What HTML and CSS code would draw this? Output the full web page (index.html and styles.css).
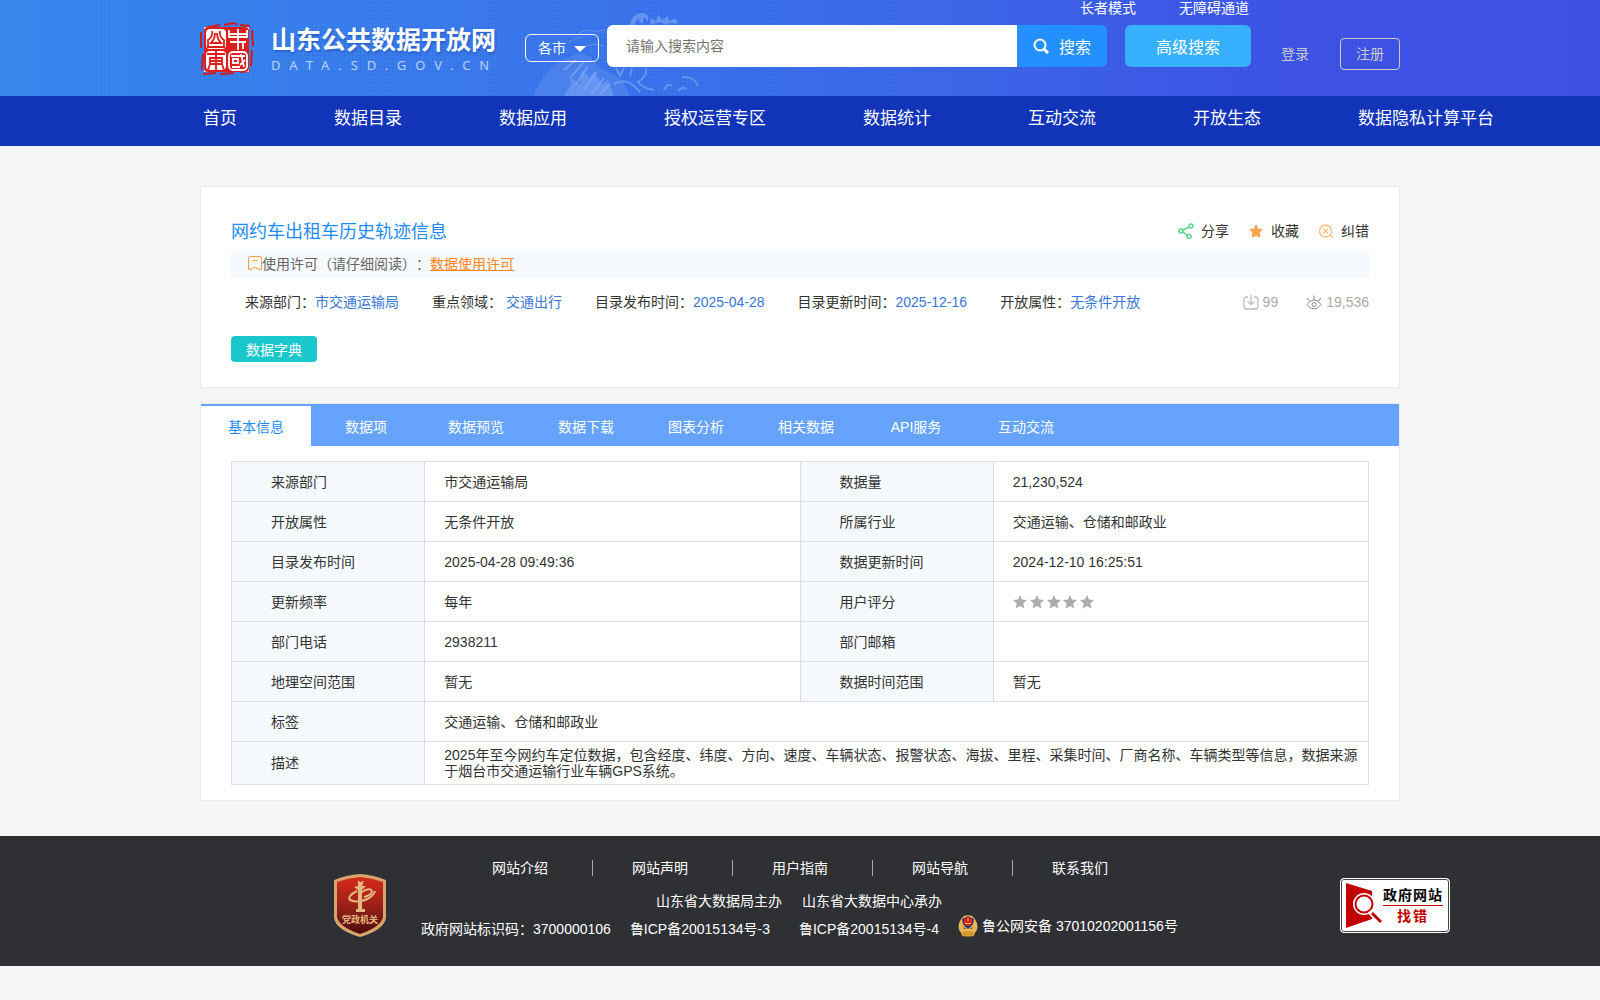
FILE: index.html
```html
<!DOCTYPE html>
<html lang="zh-CN">
<head>
    <meta charset="UTF-8">
    <meta name="viewport" content="width=device-width, initial-scale=1.0">
    <title>山东公共数据开放网</title>
    <link rel="stylesheet" href="styles.css">
</head>
<body>
    <header class="header">
        <svg class="header-art" width="220" height="96" viewBox="0 0 220 96" fill="none" stroke="#8fb4f8">
            <path d="M4 96 Q14 66 42 56 Q56 48 68 66 L92 80 L100 96 Z" fill="#6f9cf3" stroke="none" opacity=".3"/>
            <path d="M34 96 L42 84 L40 78 L50 84 L52 70 L60 78 L64 72 L72 84 L78 80 L84 96 Z" fill="#7fa8f6" stroke="none" opacity=".5"/>
            <g opacity=".5">
                <path d="M34 70 L46 60 M40 78 L54 62 M46 84 L58 66 M54 90 L66 72 M62 94 L74 78 M70 94 L80 84" stroke-width="2"/>
                <path d="M38 44 Q44 36 52 38 M48 34 Q56 28 66 32 Q74 28 78 34 M54 48 Q62 42 74 46"/>
                <path d="M86 68 L90 76 L94 68 M100 76 L102 68 M116 68 Q118 76 108 82 Q112 88 124 90 M84 84 Q96 78 104 86 L110 92" stroke-width="2"/>
                <path d="M134 90 Q138 82 142 86 M148 91 Q152 86 156 89 M152 77 Q164 76 168 86" stroke-width="2"/>
            </g>
            <g opacity=".5" fill="#8fb4f8" stroke="none">
                <path d="M100 25 Q102 13 113 13 Q120 14 118 22 L114 17 L112 25 L108 18 L104 25 Z"/>
                <path d="M120 25 L121 18 L126 21 L128 15 L132 20 L138 16 L139 21 Q149 16 147 24 L140 23 L136 25 L130 22 Z"/>
            </g>
        </svg>
        <div class="container">
            <div class="top-links">
                <a href="#">长者模式</a>
                <a href="#">无障碍通道</a>
            </div>
            <div class="header-main">
                <a class="logo" href="#">
                    <svg class="seal" width="54" height="54" viewBox="0 0 54 54" fill="none">
                        <path d="M4 6 L20 3 M24 3 L34 1 L37 3 M40 3 L50 4 M52 8 L53 24 M52 28 L51 44 M50 49 L40 50 M34 51 L20 52 M16 51 L3 52 M2 48 L3 32 M1 26 L1 10" stroke="#d01a1a" stroke-width="2"/>
                        <path d="M4 5 H49 V50 H4 Z" fill="#fff"/>
                        <rect x="4" y="5" width="45" height="45" rx="4" fill="#dc1f1c"/>
                        <rect x="6" y="7" width="20" height="20" rx="4" fill="#fff"/>
                        <rect x="6" y="29" width="20" height="19" rx="4" fill="#fff"/>
                        <g stroke="#dc1f1c" stroke-width="1.800">
                            <path d="M12 9 Q13 15 8 18 V25 H24 V18 Q19 15 20 9 M15 11 Q15 17 11 21 H21 Q17 17 17 11"/>
                            <path d="M7 32 H25 M16 29 V48 M10 36 H22 V42 H10 Z M10 39 H22 M10 42 L8 48 M22 42 L24 48"/>
                        </g>
                        <g stroke="#fff" stroke-width="1.800">
                            <path d="M29 8 V15 H47 V8 M38 7 V28 M29 12 H47 M30 20 H46 M43 20 V27"/>
                            <rect x="29" y="30" width="18" height="18" rx="4"/>
                            <path d="M31 34 H45 M33 37 H38 V41 H33 Z M32 45 H40 M41 32 L44 45 M45 38 L40 43"/>
                        </g>
                    </svg>
                    <span class="logo-text">
                        <span class="logo-name">山东公共数据开放网</span>
                        <span class="logo-domain">DATA.SD.GOV.CN</span>
                    </span>
                </a>
                <div class="city">
                    <select class="city-select" aria-label="各市">
                        <option>各市</option>
                    </select>
                    <span class="city-arrow"></span>
                </div>
                <form class="search">
                    <input type="text" class="search-input" placeholder="请输入搜索内容" aria-label="搜索内容">
                    <button type="button" class="search-button">
                        <svg width="16" height="16" viewBox="0 0 16 16" fill="none" stroke="#fff" stroke-width="2"><circle cx="7" cy="7" r="5.500"/><path d="M11 11 L15 15" stroke-width="3"/></svg>
                        搜索
                    </button>
                </form>
                <button type="button" class="advanced-button">高级搜索</button>
                <div class="user">
                    <a href="#">登录</a>
                    <a class="register" href="#">注册</a>
                </div>
            </div>
        </div>
    </header>
    <nav class="nav">
        <div class="container nav-list">
            <a href="#">首页</a>
            <a href="#">数据目录</a>
            <a href="#">数据应用</a>
            <a href="#">授权运营专区</a>
            <a href="#">数据统计</a>
            <a href="#">互动交流</a>
            <a href="#">开放生态</a>
            <a href="#">数据隐私计算平台</a>
        </div>
    </nav>

    <main class="container">
        <section class="card summary">
            <div class="summary-head">
                <h1>网约车出租车历史轨迹信息</h1>
                <div class="actions">
                    <a href="#">
                        <svg width="16" height="16" viewBox="0 0 16 16" fill="none" stroke="#56d78d" stroke-width="1.500"><circle cx="3" cy="8" r="2"/><circle cx="13" cy="3" r="2"/><circle cx="11" cy="13.500" r="2"/><path d="M5 7 L11 4 M5 9 L9.500 12.500"/></svg>
                        分享
                    </a>
                    <a href="#">
                        <svg width="16" height="16" viewBox="0 0 16 16" fill="#ffa550" stroke="#ffa550" stroke-linejoin="round"><path d="M8 2 L10 6 L14 6.600 L11.300 9.500 L12 14 L8 12.500 L4 14 L4.700 9.500 L2 6.600 L6 6 Z"/></svg>
                        收藏
                    </a>
                    <a href="#">
                        <svg width="16" height="16" viewBox="0 0 16 16" fill="none" stroke="#fcbf85" stroke-width="1.400"><circle cx="7.500" cy="8" r="6"/><path d="M5.300 5.800 L9.700 10.200 M9.700 5.800 L5.300 10.200 M12 12 L15 15"/></svg>
                        纠错
                    </a>
                </div>
            </div>
            <div class="license">
                <svg width="14" height="15" viewBox="0 0 14 15" fill="none" stroke="#ff9a40"><path d="M.5 13.500 V2.500 Q.5 .5 2.500 .5 H11.500 Q13.500 .5 13.500 2.500 V13.500 Q10 14 7 11 Q4 14 .5 13.500 Z M5 4.500 H9"/></svg>
                <span>使用许可（请仔细阅读）：</span>
                <a href="#">数据使用许可</a>
            </div>
            <div class="meta">
                <span>来源部门：<em>市交通运输局</em></span>
                <span>重点领域： <em>交通出行</em></span>
                <span>目录发布时间：<em>2025-04-28</em></span>
                <span>目录更新时间：<em>2025-12-16</em></span>
                <span>开放属性：<em>无条件开放</em></span>
                <div class="counts">
                    <span>
                        <svg width="16" height="16" viewBox="0 0 16 16" fill="none" stroke="#bbb" stroke-width="1.300"><path d="M5 3 H3.500 Q1 3 1 5.500 V12.500 Q1 15 3.500 15 H12.500 Q15 15 15 12.500 V5.500 Q15 3 12.500 3 H11 M8 1 V10 M4.500 7.500 L8 10.500 L11.500 7.500"/></svg>
                        99
                    </span>
                    <span>
                        <svg width="16" height="16" viewBox="0 0 16 16" fill="none" stroke="#888"><path d="M1 10.500 Q4 6 8 6 Q12 6 15 10.500 Q12 15 8 15 Q4 15 1 10.500 Z M8 6 V1.500 M3.500 7 L1 4 M12.500 7 L15 4"/><circle cx="8" cy="10.500" r="2"/></svg>
                        19,536
                    </span>
                </div>
            </div>
            <button type="button" class="dict-button">数据字典</button>
        </section>

        <section class="card detail">
            <div class="tabs">
                <button type="button" class="tab active">基本信息</button>
                <button type="button" class="tab">数据项</button>
                <button type="button" class="tab">数据预览</button>
                <button type="button" class="tab">数据下载</button>
                <button type="button" class="tab">图表分析</button>
                <button type="button" class="tab">相关数据</button>
                <button type="button" class="tab">API服务</button>
                <button type="button" class="tab">互动交流</button>
            </div>
            <table class="info">
                <tr>
                    <th>来源部门</th><td>市交通运输局</td>
                    <th>数据量</th><td>21,230,524</td>
                </tr>
                <tr>
                    <th>开放属性</th><td>无条件开放</td>
                    <th>所属行业</th><td>交通运输、仓储和邮政业</td>
                </tr>
                <tr>
                    <th>目录发布时间</th><td>2025-04-28 09:49:36</td>
                    <th>数据更新时间</th><td>2024-12-10 16:25:51</td>
                </tr>
                <tr>
                    <th>更新频率</th><td>每年</td>
                    <th>用户评分</th>
                    <td>
                        <svg class="stars" width="84" height="14" viewBox="0 0 84 14" fill="#acacac">
                            <defs><path id="star" d="M7 0 L9 4.500 L14 5 L10.300 8.400 L11.400 13.500 L7 11 L2.600 13.500 L3.700 8.400 L0 5 L5 4.500 Z"/></defs>
                            <use href="#star"/>
                            <use href="#star" x="17"/>
                            <use href="#star" x="34"/>
                            <use href="#star" x="50"/>
                            <use href="#star" x="67"/>
                        </svg>
                    </td>
                </tr>
                <tr>
                    <th>部门电话</th><td>2938211</td>
                    <th>部门邮箱</th><td></td>
                </tr>
                <tr>
                    <th>地理空间范围</th><td>暂无</td>
                    <th>数据时间范围</th><td>暂无</td>
                </tr>
                <tr>
                    <th>标签</th><td colspan="3">交通运输、仓储和邮政业</td>
                </tr>
                <tr>
                    <th>描述</th>
                    <td colspan="3">2025年至今网约车定位数据，包含经度、纬度、方向、速度、车辆状态、报警状态、海拔、里程、采集时间、厂商名称、车辆类型等信息，数据来源于烟台市交通运输行业车辆GPS系统。</td>
                </tr>
            </table>
        </section>
    </main>

    <footer class="footer">
        <svg class="party-badge" width="52" height="63" viewBox="0 0 52 63">
            <defs>
                <linearGradient id="shield" x1="0" y1="0" x2="0" y2="1">
                    <stop offset="0" stop-color="#d62a18"/>
                    <stop offset=".55" stop-color="#94201a"/>
                    <stop offset="1" stop-color="#4a0b0a"/>
                </linearGradient>
            </defs>
            <path d="M26 0 Q40 1 52 6 V44 Q50 56 26 63 Q2 56 0 44 V6 Q12 1 26 0 Z" fill="#d9a46b"/>
            <path d="M26 3 Q38 4 49 8 V43 Q47 53 26 60 Q5 53 3 43 V8 Q14 4 26 3 Z" fill="url(#shield)"/>
            <path d="M24 6 L26 8 L30 7 L28 12 H32 L28 16 V35 H31 V38 H22 V35 H24 V16 L20 13 L24 12 Z" fill="#e6b77e"/>
            <path d="M23 17 Q13 22 16 26 Q24 30 35 24 Q40 21 41 17 M28 18 Q36 13 38 17 Q38 21 30 23" fill="none" stroke="#e6b77e" stroke-width="2"/>
            <text x="26" y="49" text-anchor="middle" class="party-text">党政机关</text>
        </svg>
        <div class="footer-center">
            <div class="footer-links">
                <a href="#">网站介绍</a>
                <a href="#">网站声明</a>
                <a href="#">用户指南</a>
                <a href="#">网站导航</a>
                <a href="#">联系我们</a>
            </div>
            <div class="footer-org">
                <span>山东省大数据局主办</span>
                <span>山东省大数据中心承办</span>
            </div>
            <div class="footer-record">
                <span>政府网站标识码：3700000106</span>
                <a href="#">鲁ICP备20015134号-3</a>
                <a class="record-next" href="#">鲁ICP备20015134号-4</a>
                <a class="police" href="#">
                    <svg width="20" height="22" viewBox="0 0 20 22">
                        <path d="M3 4 Q-2 12 3 18 Q10 23 17 18 Q22 12 17 4 L14 14 H6 Z" fill="#e9b55a"/>
                        <path d="M10 0 L14 1 L17 4 Q18 12 10 15 Q2 12 3 4 L6 1 Z" fill="#f0c050"/>
                        <path d="M10 1 L16 4 Q16 11 10 14 Q4 11 4 4 Z" fill="#2b3a80"/>
                        <circle cx="10" cy="6.500" r="4.500" fill="#d8241c"/>
                        <path d="M7 8.500 H13 M10 3.500 V6" stroke="#f4c94e"/>
                        <path d="M3 18 Q10 14 17 18 L16 21 Q10 22 4 21 Z" fill="#d89a30"/>
                    </svg>
                    鲁公网安备 37010202001156号
                </a>
            </div>
        </div>
        <a class="report" href="#">
            <svg width="37" height="45" viewBox="0 0 37 45">
                <path d="M1 0 L27 8 V36 L1 45 Z" fill="#c30000"/>
                <circle cx="19" cy="21" r="11" fill="#fff"/>
                <circle cx="19" cy="21" r="8.500" fill="#fff" stroke="#c30000" stroke-width="2"/>
                <path d="M25 28 L36 40" stroke="#fff" stroke-width="6"/>
                <path d="M27 30 L36 39" stroke="#c30000" stroke-width="3"/>
            </svg>
            <span class="report-text">
                <span>政府网站</span>
                <span class="report-find">找错</span>
            </span>
        </a>
    </footer>
</body>
</html>
```

FILE: styles.css
```css
* {
    box-sizing: border-box;
}
body {
    margin: 0;
    font-family: "Liberation Sans", "Noto Sans CJK SC", sans-serif;
    font-size: 14px;
    line-height: 20px;
    text-spacing-trim: space-all;
    color: #333;
    background-color: #f5f5f5;
}
a {
    color: inherit;
    text-decoration: none;
}
button,
input,
select {
    font-family: inherit;
    font-size: 14px;
}
button {
    border: none;
    padding: 0;
    cursor: pointer;
}
svg {
    flex-shrink: 0;
}
.container {
    width: 75%;
    min-width: 1200px;
    margin: 0 auto;
}

/* header */
.header {
    position: relative;
    height: 96px;
    background:
        repeating-linear-gradient(0deg, rgba(0, 40, 160, 0.06) 0 1px, transparent 1px 4px),
        repeating-linear-gradient(90deg, rgba(0, 40, 160, 0.06) 0 1px, transparent 1px 4px),
        linear-gradient(90deg, #3889ee 0%, #3b78ed 35%, #3d66e9 62%, #3f54e6 80%, #3f52e5 100%);
    color: #fff;
}
.header-art {
    position: absolute;
    left: 530px;
    top: 0;
}
.header .container {
    position: relative;
}
.top-links {
    display: flex;
    justify-content: flex-end;
    gap: 43px;
    height: 16px;
    padding-right: 151px;
    line-height: 16px;
}
.header-main {
    display: flex;
    align-items: flex-start;
}
.logo {
    display: flex;
    margin-top: 6px;
}
.logo-text {
    display: flex;
    flex-direction: column;
    width: 271px;
    padding-left: 17px;
}
.logo-name {
    font-size: 25px;
    line-height: 36px;
    font-weight: bold;
    text-shadow: 1px 2px 2px rgba(20, 60, 160, 0.4);
}
.logo-domain {
    font-family: "Noto Sans", sans-serif;
    font-size: 13px;
    line-height: 14px;
    letter-spacing: 9px;
    white-space: nowrap;
    color: #b9d3fa;
}
.city {
    position: relative;
    margin-top: 18px;
}
.city-select {
    appearance: none;
    display: block;
    width: 74px;
    height: 28px;
    padding: 0 12px;
    border: 1px solid #fff;
    border-radius: 6px;
    background: transparent;
    color: #fff;
}
.city-arrow {
    position: absolute;
    right: 13px;
    top: 12px;
    border: 6px solid transparent;
    border-top-color: #fff;
    border-bottom: none;
    pointer-events: none;
}
.search {
    display: flex;
    flex: 1;
    margin: 9px 18px 0 8px;
}
.search-input {
    flex: 1;
    min-width: 0;
    height: 42px;
    padding: 0 19px;
    border: none;
    border-radius: 6px 0 0 6px;
    background-color: #fff;
}
.search-input::placeholder {
    color: #757575;
}
.search-button {
    display: flex;
    align-items: center;
    justify-content: center;
    gap: 10px;
    width: 90px;
    height: 42px;
    border-radius: 0 6px 6px 0;
    background-color: #248fff;
    color: #fff;
    font-size: 16px;
}
.advanced-button {
    width: 126px;
    height: 42px;
    margin-top: 9px;
    border-radius: 6px;
    background-color: #36b0ff;
    color: #fff;
    font-size: 16px;
}
.user {
    display: flex;
    align-items: center;
    gap: 31px;
    margin: 22px 0 0 30px;
    color: #ccc;
}
.register {
    width: 60px;
    border: 1px solid #ccc;
    border-radius: 4px;
    line-height: 30px;
    text-align: center;
}

/* nav */
.nav {
    height: 50px;
    background-color: #1134b8;
    color: #fff;
    font-size: 17px;
    line-height: 46px;
    white-space: nowrap;
}
.nav-list {
    display: flex;
    gap: 97px;
    padding-left: 3px;
}

/* cards */
.card {
    border: 1px solid #ebebeb;
    background-color: #fff;
}
.summary {
    margin-top: 40px;
    padding: 30px 30px 25px;
}
.summary-head {
    display: flex;
    justify-content: space-between;
    height: 32px;
}
.summary-head h1 {
    margin: 0;
    font-size: 18px;
    line-height: 30px;
    font-weight: normal;
    color: #1e8cf8;
}
.actions {
    display: flex;
    gap: 19px;
}
.actions a {
    display: flex;
    align-items: center;
    gap: 7px;
    height: 28px;
}
.license {
    display: flex;
    align-items: center;
    height: 29px;
    padding-left: 17px;
    background-color: #f6f9fe;
    color: #666;
}
.license a {
    color: #ff8519;
    text-decoration: underline;
}
.meta {
    display: flex;
    gap: 33px;
    margin: 14px 0 24px;
    padding-left: 14px;
}
.meta em {
    font-style: normal;
    color: #3b76d6;
}
.counts {
    display: flex;
    gap: 28px;
    margin-left: auto;
    color: #aaa;
}
.counts span {
    display: flex;
    align-items: center;
    gap: 4px;
}
.dict-button {
    display: block;
    width: 86px;
    height: 26px;
    border-radius: 4px;
    background-color: #1ac7cb;
    color: #fff;
}

/* tabs and table */
.detail {
    margin-top: 15px;
    padding-bottom: 15px;
}
.tabs {
    display: flex;
    height: 42px;
    border-top: 2px solid #65a3ff;
    background-color: #65a3ff;
}
.tab {
    width: 110px;
    background: transparent;
    color: #fff;
}
.tab.active {
    background-color: #fff;
    color: #1e8cf8;
}
.info {
    width: calc(100% - 60px);
    margin: 15px 30px 0;
    border-collapse: collapse;
    table-layout: fixed;
    line-height: 16px;
}
.info th,
.info td {
    height: 40px;
    border: 1px solid #ddd;
    padding: 5px 10px 5px 19px;
    text-align: left;
}
.info th {
    width: 17%;
    padding-left: 39px;
    background-color: #f6f9fe;
    font-weight: normal;
}
.stars {
    display: block;
}

/* footer */
.footer {
    display: flex;
    justify-content: space-between;
    height: 130px;
    margin-top: 35px;
    padding: 0 150px 0 334px;
    background-color: #2f3034;
    color: #fff;
}
.party-badge {
    margin-top: 38px;
}
.party-text {
    font-size: 9px;
    font-weight: bold;
    fill: #e6b77e;
}
.footer-center {
    flex: 1;
    padding: 22px 0 0 35px;
}
.footer-links {
    display: flex;
    padding-left: 32px;
}
.footer-links a {
    width: 140px;
    padding-left: 39px;
    background: linear-gradient(#aaa, #aaa) no-repeat right center / 1px 16px;
}
.footer-links a:last-child {
    background: none;
}
.footer-org {
    display: flex;
    gap: 20px;
    margin-top: 13px;
    padding-left: 235px;
}
.footer-record {
    display: flex;
    align-items: center;
    gap: 19px;
    height: 22px;
    margin-top: 7px;
    white-space: nowrap;
}
.record-next {
    padding-left: 10px;
}
.police {
    display: flex;
    align-items: center;
    gap: 4px;
    padding-bottom: 6px;
    line-height: 26px;
}
.report {
    display: flex;
    align-items: center;
    gap: 1px;
    width: 110px;
    height: 55px;
    margin-top: 42px;
    padding-left: 4px;
    border: 1px solid #fff;
    border-radius: 4px;
    background-color: #fff;
    box-shadow: inset 0 0 0 1px #444;
    color: #000;
}
.report-text {
    font-weight: bold;
    line-height: 20px;
    letter-spacing: 1px;
    text-align: center;
}
.report-text span {
    display: block;
}
.report-text .report-find {
    border-top: 1px solid #c30000;
    letter-spacing: 2px;
    color: #c30000;
}
```
